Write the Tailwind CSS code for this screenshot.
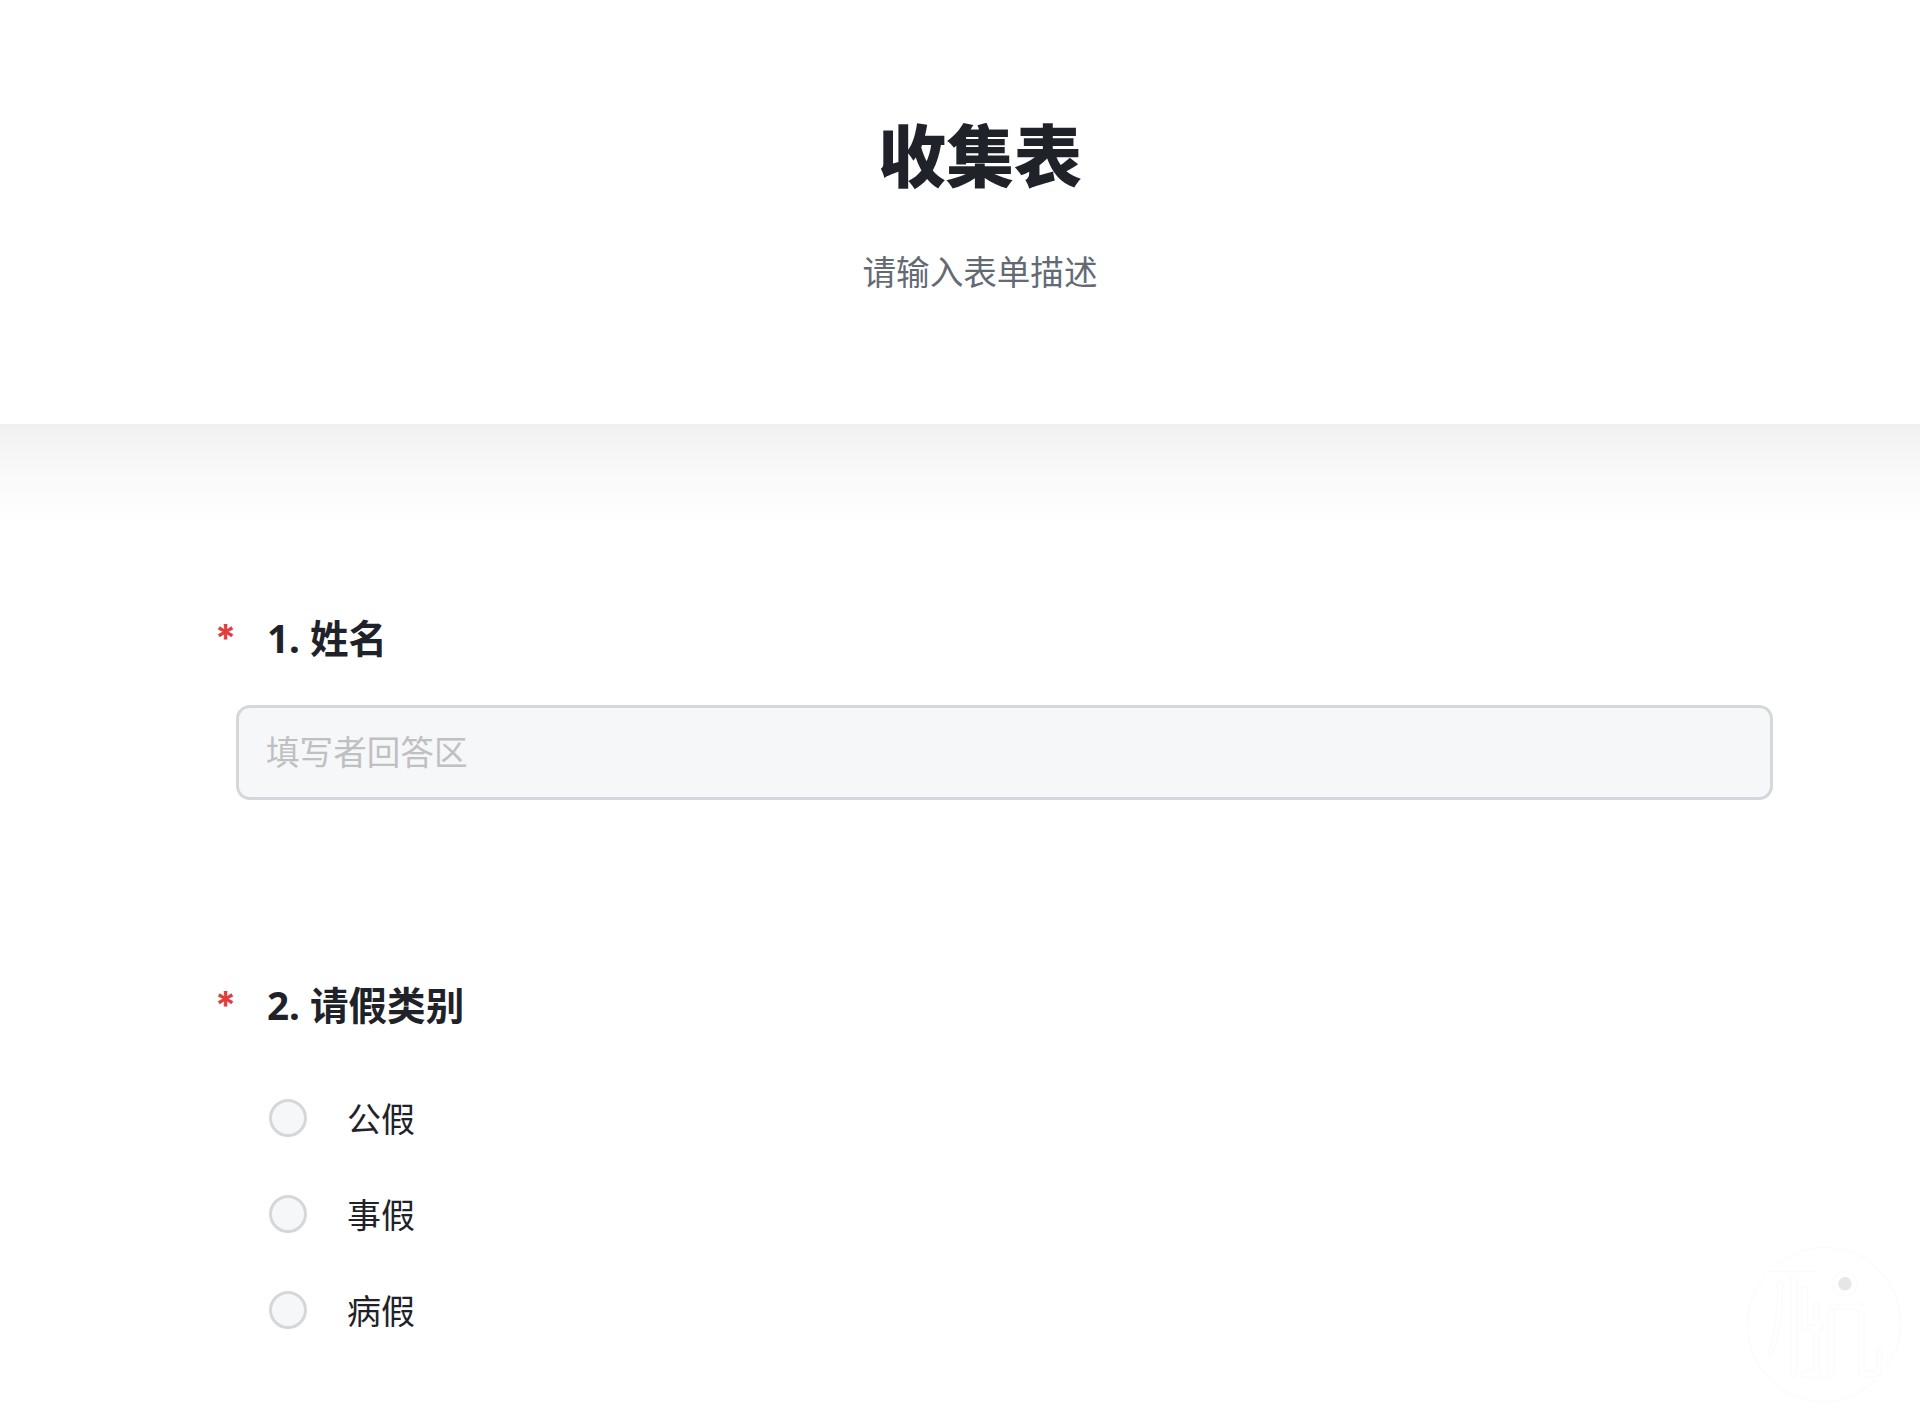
<!DOCTYPE html>
<html lang="zh">
<head>
<meta charset="utf-8">
<script src="https://cdn.jsdelivr.net/npm/@tailwindcss/browser@4"></script>
<title>收集表</title>
</head>
<body class="bg-white font-['Noto_Sans','Noto_Sans_CJK_SC',sans-serif] text-[#1f2329]">
<div class="relative h-[1420px] w-[1920px] overflow-hidden">
  <header class="flex h-[424px] flex-col items-center pt-[113px] pl-[40px]">
    <h1 class="text-[68px] leading-[86px] font-black">收集表</h1>
    <p class="mt-[50px] text-[33.6px] leading-[46px] text-[#646a73]">请输入表单描述</p>
  </header>
  <div class="h-[100px] bg-gradient-to-b from-[#f0f0f0] via-[#f8f8f8] via-40% to-white"></div>
  <main class="pt-[89px] pr-[147px] pl-[236px]">
    <section>
      <div class="relative flex h-[50px] items-center pl-[31px]">
        <span class="absolute top-[0px] left-[-21px] font-['Inter'] text-[38px] leading-[50px] font-bold text-[#e03e3e]">*</span>
        <h2 class="text-[38.6px] leading-[50px] font-bold">1. 姓名</h2>
      </div>
      <div class="mt-[42px] flex h-[95px] items-center rounded-[14px] border-[3px] border-[#d5d7da] bg-[#f6f7f9] pl-[27px] text-[33.6px] text-[#bfc0c2]">填写者回答区</div>
    </section>
    <section class="mt-[180px]">
      <div class="relative flex h-[50px] items-center pl-[31px]">
        <span class="absolute top-[0px] left-[-21px] font-['Inter'] text-[38px] leading-[50px] font-bold text-[#e03e3e]">*</span>
        <h2 class="text-[38.6px] leading-[50px] font-bold">2. 请假类别</h2>
      </div>
      <ul class="mt-[69px] flex flex-col gap-[58px] pl-[33px]">
        <li class="flex h-[38px] items-center gap-[40px] text-[34px]"><span class="size-[38px] rounded-full border-[3px] border-[#d5d7da] bg-[#f6f7f9]"></span><span class="pt-[2px]">公假</span></li>
        <li class="flex h-[38px] items-center gap-[40px] text-[34px]"><span class="size-[38px] rounded-full border-[3px] border-[#d5d7da] bg-[#f6f7f9]"></span><span class="pt-[2px]">事假</span></li>
        <li class="flex h-[38px] items-center gap-[40px] text-[34px]"><span class="size-[38px] rounded-full border-[3px] border-[#d5d7da] bg-[#f6f7f9]"></span><span class="pt-[2px]">病假</span></li>
      </ul>
    </section>
  </main>
  <svg class="absolute top-[1230px] left-[1720px]" width="200" height="190" viewBox="0 0 600 570" fill="none" stroke="#fbfbfb" stroke-width="4" stroke-linecap="round" stroke-linejoin="round">
    <path d="M165 110C215 65 270 52 313 52C440 52 542 155 542 283C542 330 525 375 497 412"/>
    <path d="M135 140C100 185 82 235 82 283C82 410 185 515 313 515C370 515 425 490 465 450"/>
    <path d="M145 125H298"/>
    <path d="M175 150C190 150 190 160 188 190C185 270 175 330 155 378C150 385 142 378 145 370C165 320 172 250 172 160Z"/>
    <path d="M212 140H230V435C230 442 212 442 212 435Z"/>
    <path d="M245 175C245 168 262 168 262 175V285H282V225C282 215 298 215 298 225V285H310V300H298V425H325V240C325 232 342 232 342 240V430C342 438 335 442 325 442H250C240 442 240 425 250 425H282V300H245Z"/>
    <path d="M350 222H420C428 222 432 228 432 235V415C432 420 436 424 442 424H462C468 424 470 420 470 415V362C470 355 485 355 485 362V420C485 432 475 440 462 440H430C420 440 415 432 415 420V245C415 240 412 238 408 238H355C345 238 345 228 350 222Z"/>
    <circle cx="375" cy="161" r="36"/>
    <circle cx="375" cy="161" r="20" fill="#e6e6e6" stroke="none"/>
  </svg>
</div>
</body>
</html>
